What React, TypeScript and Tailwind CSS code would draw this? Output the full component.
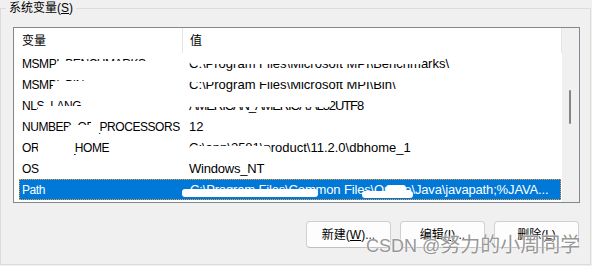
import React from 'react';

type Row = { name: string; value: string; valueTrack?: string; selected?: boolean };

const rows: Row[] = [
  { name: 'MSMPI_BENCHMARKS', value: 'C:\\Program Files\\Microsoft MPI\\Benchmarks\\' },
  { name: 'MSMPI_BIN', value: 'C:\\Program Files\\Microsoft MPI\\Bin\\' },
  { name: 'NLS_LANG', value: 'AMERICAN_AMERICA.AL32UTF8', valueTrack: 'tracking-[-1.1px]' },
  { name: 'NUMBER_OF_PROCESSORS', value: '12' },
  { name: 'ORACLE_HOME', value: 'C:\\app\\2581\\product\\11.2.0\\dbhome_1' },
  { name: 'OS', value: 'Windows_NT', valueTrack: 'tracking-[-0.2px]' },
  {
    name: 'Path',
    value: 'C:\\Program Files\\Common Files\\Oracle\\Java\\javapath;%JAVA...',
    valueTrack: 'tracking-[-0.15px]',
    selected: true,
  },
];

// white marker strokes from the screenshot, page coords [x1, y1, x2, y2]
const wipes: [number, number, number, number][] = [
  [56, 61, 155, 73],
  [189, 53, 423, 64],
  [53, 81, 92, 94],
  [189, 74, 400, 82],
  [38, 106, 85, 115],
  [189, 95, 331, 107],
  [68, 125, 99, 136],
  [91, 116, 97, 125],
  [38, 137, 74, 157],
  [189, 146, 270, 157],
  [270, 137, 425, 142],
  [182, 189, 318, 197],
  [362, 191, 413, 198],
  [386, 185, 406, 198],
];

function Button({ label, hot }: { label: string; hot: string }) {
  const [before, after] = label.split(hot);
  return (
    <button
      type="button"
      className="w-[85px] h-[27px] bg-[#fdfdfd] border border-[#d0d0d0] border-b-[#c0c0c0] rounded-[4px] text-[12px] text-black leading-none"
    >
      {before}
      <span className="underline">{hot}</span>
      {after}
    </button>
  );
}

export default function App() {
  return (
    <div className="relative w-[592px] h-[266px] bg-[#f0f0f0] overflow-hidden text-black font-['Liberation_Sans','Noto_Sans_CJK_SC',sans-serif]">
      <fieldset className="w-[591px] h-[265px] border border-[#dcdcdc]">
        <legend className="ml-[5px] px-[3px] text-[12px] leading-[16px]">
          系统变量(<span className="underline">S</span>)
        </legend>

        <div className="relative ml-[12px] mt-[11px] w-[567px] h-[176px] border border-[#828790] bg-white flex">
          <div className="w-[548px] flex flex-col">
            <div className="h-[25px] flex text-[12px]">
              <div className="w-[169px] pl-[8px] flex items-center border-r border-[#e5e5e5]">变量</div>
              <div className="flex-1 pl-[7px] flex items-center border-r border-[#e5e5e5]">值</div>
            </div>
            {rows.map((r) => (
              <div key={r.name} className="h-[21px] pl-[5px] flex">
                <div
                  className={`w-[542px] flex items-center whitespace-nowrap overflow-hidden ${
                    r.selected ? 'bg-[#0078d7] text-white border border-dotted border-[#f0a030]' : ''
                  }`}
                >
                  <div
                    className={`w-[163px] shrink-0 text-[12px] tracking-[-0.45px] ${r.selected ? 'pl-[2px]' : 'pl-[3px]'}`}
                  >
                    {r.name}
                  </div>
                  <div className={`min-w-0 flex-1 pl-[7px] pr-[4px] text-[13px] truncate ${r.valueTrack ?? ''}`}>
                    {r.value}
                  </div>
                </div>
              </div>
            ))}
          </div>
          <div className="relative flex-1 bg-[#f0f0f0]">
            <div className="absolute left-[7px] top-[62px] w-[2px] h-[34px] rounded-full bg-[#858585]" />
          </div>

          {wipes.map(([x1, y1, x2, y2], i) => (
            <div
              key={i}
              className="absolute bg-white rounded-[3px]"
              style={{ left: x1 - 14, top: y1 - 28, width: x2 - x1, height: y2 - y1 }}
            />
          ))}
        </div>

        <div className="ml-[12px] mt-[18px] w-[566px] flex justify-end gap-[9px]">
          <Button label="新建(W)..." hot="W" />
          <Button label="编辑(I)..." hot="I" />
          <Button label="删除(L)" hot="L" />
        </div>
      </fieldset>

      <div className="absolute left-[366px] top-[231px] leading-[28px] whitespace-nowrap text-[#8a8a8a]/90 [text-shadow:0_0_2px_#ffffff,0_0_1px_#ffffff]">
        <span className="text-[18px]">CSDN @</span>
        <span className="text-[20px]">努力的小周同学</span>
      </div>
    </div>
  );
}
